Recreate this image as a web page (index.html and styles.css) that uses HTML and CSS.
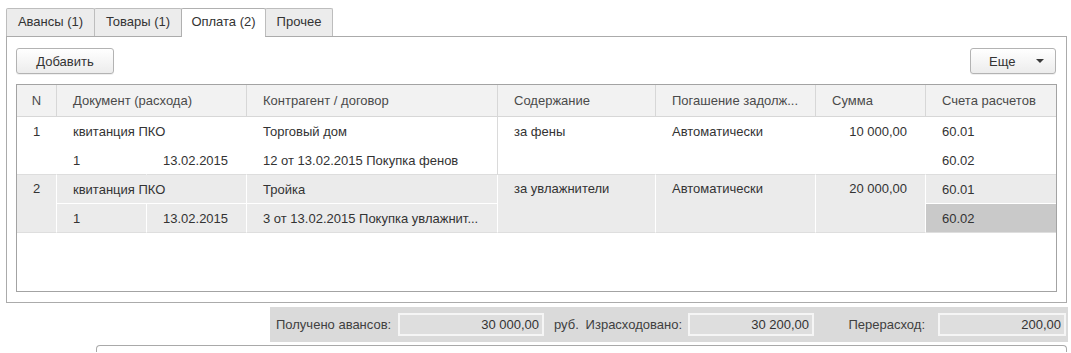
FILE: index.html
```html
<!DOCTYPE html>
<html lang="ru">
<head>
<meta charset="utf-8">
<title>Оплата</title>
<link rel="stylesheet" href="styles.css">
</head>
<body>
<div class="page">
  <div class="tabs">
    <div class="tab t1">Авансы (1)</div>
    <div class="tab t2">Товары (1)</div>
    <div class="tab t3 active">Оплата (2)</div>
    <div class="tab t4">Прочее</div>
  </div>
  <div class="panel">
    <div class="toolbar">
      <button class="btn add">Добавить</button>
      <button class="btn more"><span>Еще</span><span class="caret"></span></button>
    </div>
    <div class="grid">
      <table class="tbl">
        <colgroup>
          <col class="c-n"><col class="c-da"><col class="c-db"><col class="c-k"><col class="c-s"><col class="c-p"><col class="c-sum"><col class="c-sch">
        </colgroup>
        <thead>
          <tr>
            <th class="center">N</th>
            <th colspan="2">Документ (расхода)</th>
            <th>Контрагент / договор</th>
            <th>Содержание</th>
            <th>Погашение задолж...</th>
            <th>Сумма</th>
            <th class="last">Счета расчетов</th>
          </tr>
        </thead>
        <tbody class="r1">
          <tr>
            <td rowspan="2" class="center top end">1</td>
            <td colspan="2">квитанция ПКО</td>
            <td class="k">Торговый дом</td>
            <td rowspan="2" class="top end">за фены</td>
            <td rowspan="2" class="top end">Автоматически</td>
            <td rowspan="2" class="top end right">10 000,00</td>
            <td class="last">60.01</td>
          </tr>
          <tr class="sub2">
            <td>1</td>
            <td class="right">13.02.2015</td>
            <td class="k">12 от 13.02.2015 Покупка фенов</td>
            <td class="last">60.02</td>
          </tr>
        </tbody>
        <tbody class="r2">
          <tr class="sub1">
            <td rowspan="2" class="center top end">2</td>
            <td colspan="2">квитанция ПКО</td>
            <td class="k">Тройка</td>
            <td rowspan="2" class="top end">за увлажнители</td>
            <td rowspan="2" class="top end">Автоматически</td>
            <td rowspan="2" class="top end right">20 000,00</td>
            <td class="last">60.01</td>
          </tr>
          <tr class="sub2">
            <td>1</td>
            <td class="right">13.02.2015</td>
            <td class="k">3 от 13.02.2015 Покупка увлажнит...</td>
            <td class="last current">60.02</td>
          </tr>
        </tbody>
      </table>
    </div>
  </div>
  <div class="totals">
    <span class="lbl l1">Получено авансов:</span>
    <span class="field f1">30 000,00</span>
    <span class="unit">руб.</span>
    <span class="lbl l2">Израсходовано:</span>
    <span class="field f2">30 200,00</span>
    <span class="lbl l3">Перерасход:</span>
    <span class="field f3">200,00</span>
  </div>
  <div class="comment"></div>
</div>
</body>
</html>
```

FILE: styles.css
```css
html, body {
  margin: 0;
  padding: 0;
  background: #fff;
  overflow: hidden;
}

body {
  font-family: "Liberation Sans", Arial, sans-serif;
  font-size: 13px;
  color: #333;
}

.page {
  padding: 8px 0 0 6px;
  width: 1062px;
}

/* Tabs */
.tabs {
  display: flex;
  align-items: flex-start;
  height: 28px;
  position: relative;
  z-index: 1;
}

.tab {
  box-sizing: border-box;
  height: 28px;
  line-height: 26px;
  text-align: center;
  background: #ececec;
  border: 1px solid #bdbdbd;
  border-bottom: none;
  border-radius: 2px 2px 0 0;
  color: #333;
  margin-left: -1px;
}

.t1 { width: 89px; margin-left: 0; }
.t2 { width: 88px; }
.t3 { width: 85px; }
.t4 { width: 68px; }

.tab.active {
  height: 29px;
  background: #fff;
  border-color: #b0b0b0;
}

/* Panel */
.panel {
  box-sizing: border-box;
  width: 1061px;
  height: 267px;
  border: 1px solid #ababab;
  padding: 11px 9px 10px 9px;
}

.toolbar {
  display: flex;
  justify-content: space-between;
  height: 26px;
}

.btn {
  box-sizing: border-box;
  height: 26px;
  margin: 0;
  border: 1px solid #b3b3b3;
  border-radius: 3px;
  background: linear-gradient(#ffffff, #ececec);
  box-shadow: 0 1px 0 rgba(0, 0, 0, 0.06);
  font-family: "Liberation Sans", Arial, sans-serif;
  font-size: 13px;
  color: #333;
  padding: 0;
}

.add {
  width: 98px;
}

.more {
  width: 86px;
  margin-right: 1px;
  display: flex;
  align-items: center;
  justify-content: space-between;
  padding: 0 11px 0 18px;
}

.caret {
  width: 0;
  height: 0;
  border-left: 4px solid transparent;
  border-right: 4px solid transparent;
  border-top: 4px solid #3a3a3a;
}

/* Grid */
.grid {
  box-sizing: border-box;
  margin-top: 10px;
  height: 208px;
  border: 1px solid #a3a3a3;
  overflow: hidden;
}

.tbl {
  width: 1039px;
  table-layout: fixed;
  border-collapse: separate;
  border-spacing: 0;
}

.c-n { width: 40px; }
.c-da { width: 90px; }
.c-db { width: 100px; }
.c-k { width: 251px; }
.c-s { width: 158px; }
.c-p { width: 160px; }
.c-sum { width: 110px; }
.c-sch { width: 130px; }

.tbl th {
  height: 31px;
  padding: 0 0 0 16px;
  background: #f2f2f2;
  border-right: 1px solid #d7d7d7;
  border-bottom: 1px solid #d7d7d7;
  font-weight: normal;
  text-align: left;
  color: #4a4a4a;
  white-space: nowrap;
  overflow: hidden;
}

.tbl th.center {
  padding: 0;
  text-align: center;
}

.tbl th.last,
.tbl td.last {
  border-right: none;
}

.tbl td {
  height: 28px;
  padding: 0 16px 0 16px;
  border-right: 1px solid #fff;
  white-space: nowrap;
  overflow: hidden;
  vertical-align: middle;
}

.tbl td.center {
  padding: 0;
  text-align: center;
}

.tbl td.right {
  text-align: right;
  padding-right: 18px;
}

.tbl td.top {
  vertical-align: top;
  line-height: 28px;
}

.r1 td {
  background: #fff;
}

.r1 td.k {
  border-right-color: #dadada;
}

.r1 tr:first-child td {
  height: 29px;
}

.r1 tr.sub2 td,
.r1 td.end {
  border-bottom: 1px solid #dddddd;
}

.r1 td.top {
  line-height: 29px;
}

.r2 td {
  background: #ebebeb;
}

.r2 tr.sub1 td {
  border-bottom: 1px solid #fff;
}

.r2 tr.sub1 td.end,
.r2 tr.sub2 td {
  border-bottom: 1px solid #dedede;
}

.r2 td.current {
  background: #c9c9c9;
}

/* Totals */
.totals {
  box-sizing: border-box;
  margin: 4px 0 0 264px;
  width: 798px;
  height: 35px;
  background: #dadada;
  display: flex;
  align-items: center;
  padding: 0 2px 0 6px;
  color: #404040;
  white-space: nowrap;
}

.lbl {
  box-sizing: border-box;
}

.l1 { width: 122px; }
.l2 { width: 112px; text-align: right; padding-right: 6px; }
.l3 { width: 124px; text-align: right; padding-right: 13px; }

.unit {
  box-sizing: border-box;
  width: 32px;
  padding-left: 10px;
}

.field {
  box-sizing: border-box;
  height: 23px;
  line-height: 19px;
  border: 2px solid #f5f5f5;
  background: #dedede;
  text-align: right;
  padding-right: 3px;
  color: #333;
}

.f1 { width: 146px; }
.f2 { width: 126px; }
.f3 { width: 128px; }

.comment {
  box-sizing: border-box;
  margin: 3px 0 0 90px;
  width: 971px;
  height: 7px;
  border: 1px solid #a9a9a9;
  border-bottom: none;
  border-radius: 4px 4px 0 0;
}
```
